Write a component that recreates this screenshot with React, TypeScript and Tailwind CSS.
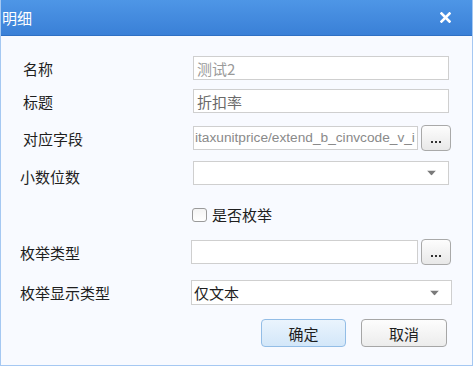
import React from "react";

const font = { fontFamily: '"Noto Sans CJK SC", "Noto Sans", sans-serif' };

function Arrow() {
  return (
    <svg width="9" height="5" viewBox="0 0 9 5" className="absolute right-[12px] top-1/2 -translate-y-1/2">
      <path d="M0 0 L9 0 L4.5 5 Z" fill="#7a7a7a" />
    </svg>
  );
}

function DotsBtn() {
  return (
    <div className="ml-[3px] w-[30px] h-[26px] rounded-[4px] border border-[#a9a9a9] bg-gradient-to-b from-[#fdfdfd] to-[#e8e8e8] flex items-end justify-center pb-[7px]">
      <div className="flex gap-[2px]">
        <span className="w-[2px] h-[2px] bg-[#333]" />
        <span className="w-[2px] h-[2px] bg-[#333]" />
        <span className="w-[2px] h-[2px] bg-[#333]" />
      </div>
    </div>
  );
}

export default function App() {
  return (
    <div className="w-[473px] h-[366px] overflow-hidden bg-[#f8faff] border-x border-b border-[#a5c8f2] flex flex-col text-[15px] text-[#1e1e1e]" style={font}>
      <div className="h-[36px] shrink-0 -mx-px bg-gradient-to-b from-[#4e96e6] to-[#3a80d7] border-b border-[#2f70c4] flex items-center justify-between pl-[2px] pr-[22px] text-white">
        <span className="leading-none">明细</span>
        <svg width="11" height="11" viewBox="0 0 11 11">
          <path d="M1.5 1.5 L9.5 9.5 M9.5 1.5 L1.5 9.5" stroke="#fff" strokeWidth="2.6" strokeLinecap="square" />
        </svg>
      </div>

      <div className="flex flex-col">
        <div className="flex items-center mt-[20px] h-[24px]">
          <div className="w-[192px] pl-[22px] leading-none">名称</div>
          <div className="w-[256px] h-[24px] border border-[#cfcfcf] bg-white flex items-center pl-[3px] text-[#9a9a9a] leading-none">测试2</div>
        </div>
        <div className="flex items-center mt-[9px] h-[24px]">
          <div className="w-[192px] pl-[22px] leading-none">标题</div>
          <div className="w-[256px] h-[24px] border border-[#cfcfcf] bg-white flex items-center pl-[3px] text-[#6a6a6a] leading-none">折扣率</div>
        </div>
        <div className="flex items-center mt-[12px] h-[26px]">
          <div className="w-[192px] pl-[22px] leading-none">对应字段</div>
          <div className="w-[225px] h-[24px] border border-[#cfcfcf] bg-white flex items-center pl-[1px] overflow-hidden whitespace-nowrap text-[13.7px] text-[#8a8a8a] leading-none" style={{ fontFamily: '"Liberation Sans", Arial, sans-serif' }}>itaxunitprice/extend_b_cinvcode_v_i</div>
          <DotsBtn />
        </div>
        <div className="flex items-start mt-[10px] h-[24px]">
          <div className="w-[192px] pl-[19px] pt-[8px] leading-none">小数位数</div>
          <div className="relative w-[256px] h-[24px] border border-[#cfcfcf] bg-white">
            <Arrow />
          </div>
        </div>
        <div className="flex items-center mt-[22px] h-[15px]">
          <div className="w-[191px]" />
          <div className="w-[15px] h-[14px] rounded-[3px] border border-[#9a9a9a] bg-gradient-to-b from-[#f4f4f4] to-white" />
          <span className="ml-[5px] leading-none">是否枚举</span>
        </div>
        <div className="flex items-center mt-[17px] h-[26px]">
          <div className="w-[190px] pl-[19px] leading-none">枚举类型</div>
          <div className="w-[227px] h-[24px] border border-[#cfcfcf] bg-white" />
          <DotsBtn />
        </div>
        <div className="flex items-center mt-[15px] h-[25px]">
          <div className="w-[190px] pl-[19px] leading-none">枚举显示类型</div>
          <div className="relative w-[261px] h-[25px] border border-[#cfcfcf] bg-white flex items-center pl-[2px] leading-none">
            仅文本
            <Arrow />
          </div>
        </div>
        <div className="flex mt-[14px] h-[28px]">
          <div className="w-[260px]" />
          <div className="w-[85px] h-[28px] rounded-[4px] border border-[#93bde6] bg-gradient-to-b from-[#eaf4fd] to-[#d3e7f9] flex items-center justify-center leading-none">确定</div>
          <div className="ml-[15px] w-[86px] h-[28px] rounded-[4px] border border-[#a6a6a6] bg-gradient-to-b from-[#fdfdfd] to-[#ececec] flex items-center justify-center leading-none">取消</div>
        </div>
      </div>
    </div>
  );
}
